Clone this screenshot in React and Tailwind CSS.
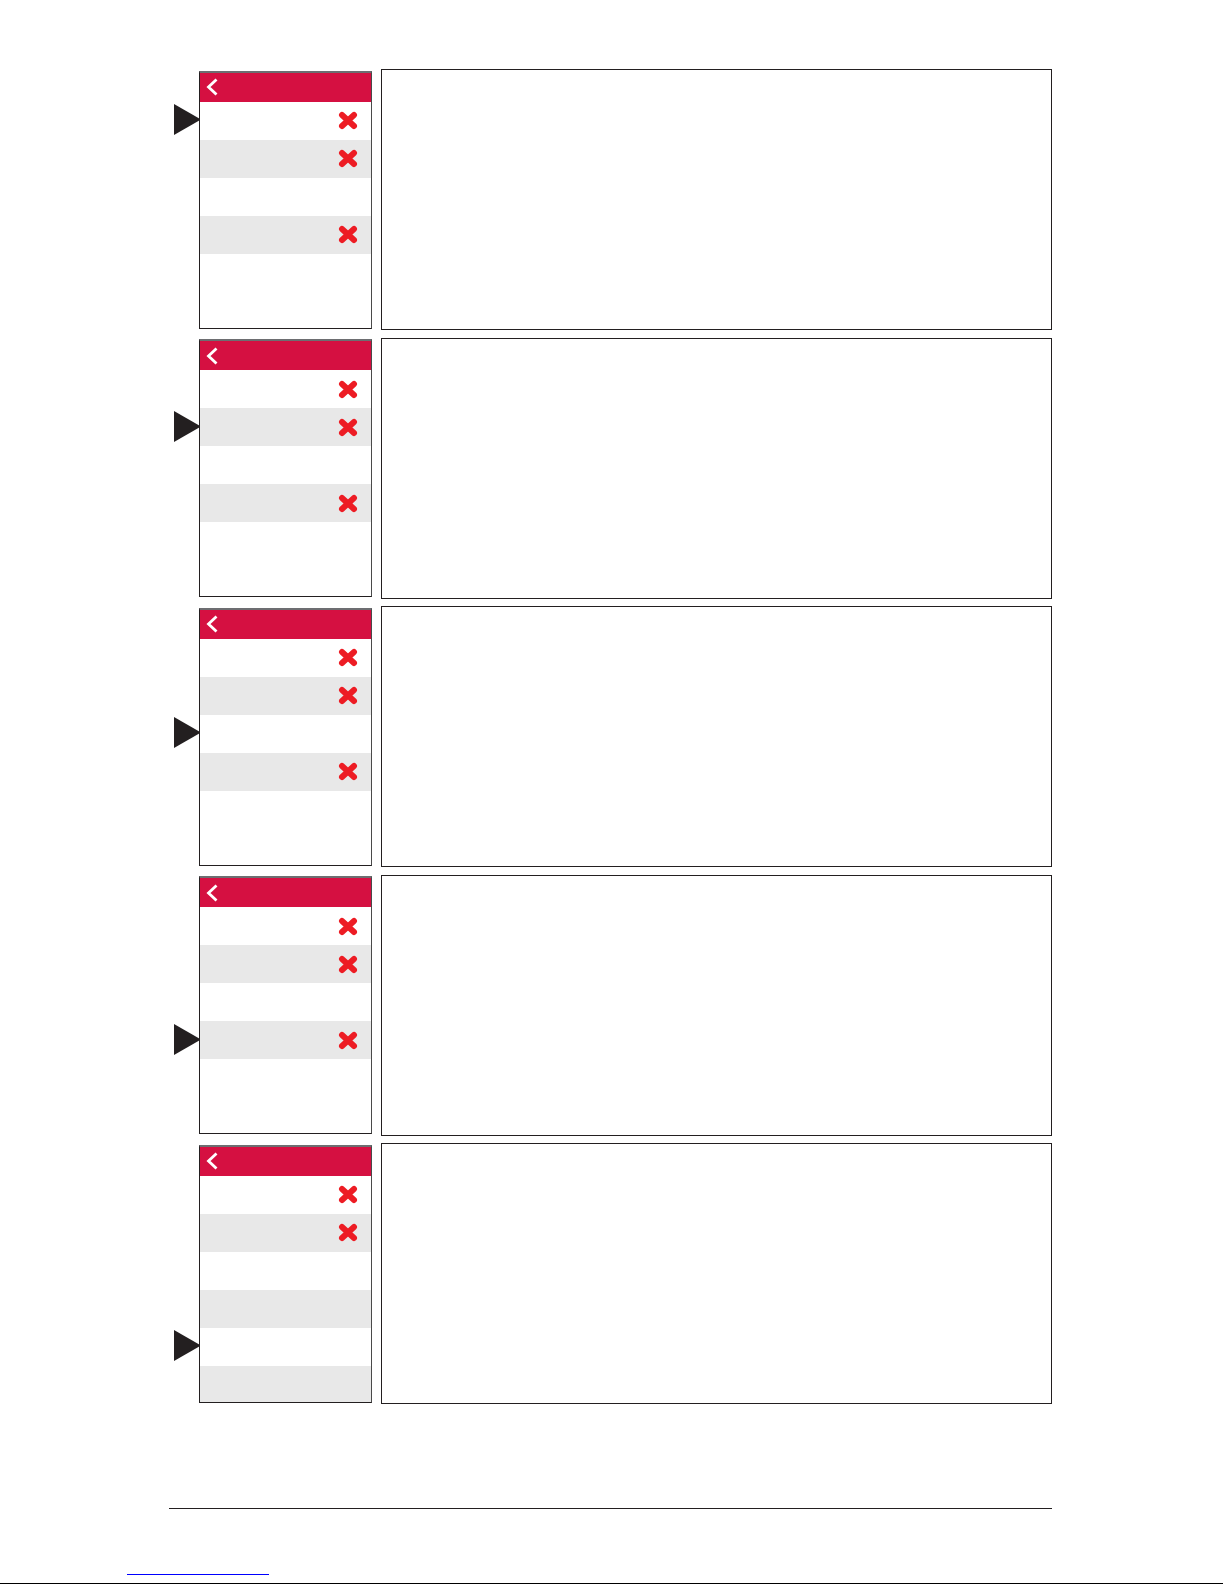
import React from "react";

const panels = [
  { arrow: 0, rows: [true, true, false, true] },
  { arrow: 1, rows: [true, true, false, true] },
  { arrow: 2, rows: [true, true, false, true] },
  { arrow: 3, rows: [true, true, false, true] },
  { arrow: 4, rows: [true, true, false, false, false, false] },
];

const RedX = () => (
  <svg width="20" height="19" viewBox="0 0 20 19">
    <path
      d="M4 4 L16 15 M16 4 L4 15"
      stroke="#ed1c24"
      strokeWidth="6"
      strokeLinecap="round"
      fill="none"
    />
  </svg>
);

const Pointer = () => (
  <svg width="27" height="31" viewBox="0 0 27 31" className="shrink-0">
    <polygon points="0,0 27,15.5 0,31" fill="#231f20" />
  </svg>
);

const Chevron = () => (
  <svg width="12" height="18" viewBox="0 0 12 18">
    <polyline points="10.5,1.5 2.5,9 10.5,16.5" stroke="#fff" strokeWidth="2.8" fill="none" />
  </svg>
);

const MenuScreen = ({ rows }) => (
  <div className="w-[173px] h-[258px] overflow-hidden bg-white border border-[#231f20] border-t-2 border-t-[#6d6e71] border-r-[#4a4a4a]">
    <div className="h-[29px] bg-[#d51041] flex items-center pl-[6px]">
      <Chevron />
    </div>
    {rows.map((hasX, i) => (
      <div
        key={i}
        className={`h-[38px] flex items-center justify-end pr-[13px] ${i % 2 === 1 ? "bg-[#e8e8e8]" : "bg-white"}`}
      >
        {hasX && <RedX />}
      </div>
    ))}
  </div>
);

const Step = ({ panel }) => (
  <div className="flex items-center">
    <div className="w-[25px] h-[258px] flex flex-col">
      <div className="h-[30px]" />
      {[0, 1, 2, 3, 4, 5].map((i) => (
        <div key={i} className="h-[38px] flex items-center">
          {panel.arrow === i && <Pointer />}
        </div>
      ))}
    </div>
    <MenuScreen rows={panel.rows} />
    <div className="ml-[9px] w-[671px] h-[261px] border-[1.5px] border-[#231f20] bg-white" />
  </div>
);

export default function App() {
  return (
    <div className="w-[1225px] h-[1585px] bg-white relative font-['Liberation_Sans',sans-serif]">
      <div className="pt-[69px] pl-[174px] flex flex-col gap-[7.5px]">
        {panels.map((p, i) => (
          <Step key={i} panel={p} />
        ))}
      </div>
      <div className="mt-[104px] ml-[169px] w-[883px] h-px bg-[#231f20]" />
      <div className="mt-[65px] ml-[127px] w-[142px] h-px bg-[#0000ff]" />
      <div className="mt-[8px] w-[1223px] h-px bg-black" />
    </div>
  );
}
